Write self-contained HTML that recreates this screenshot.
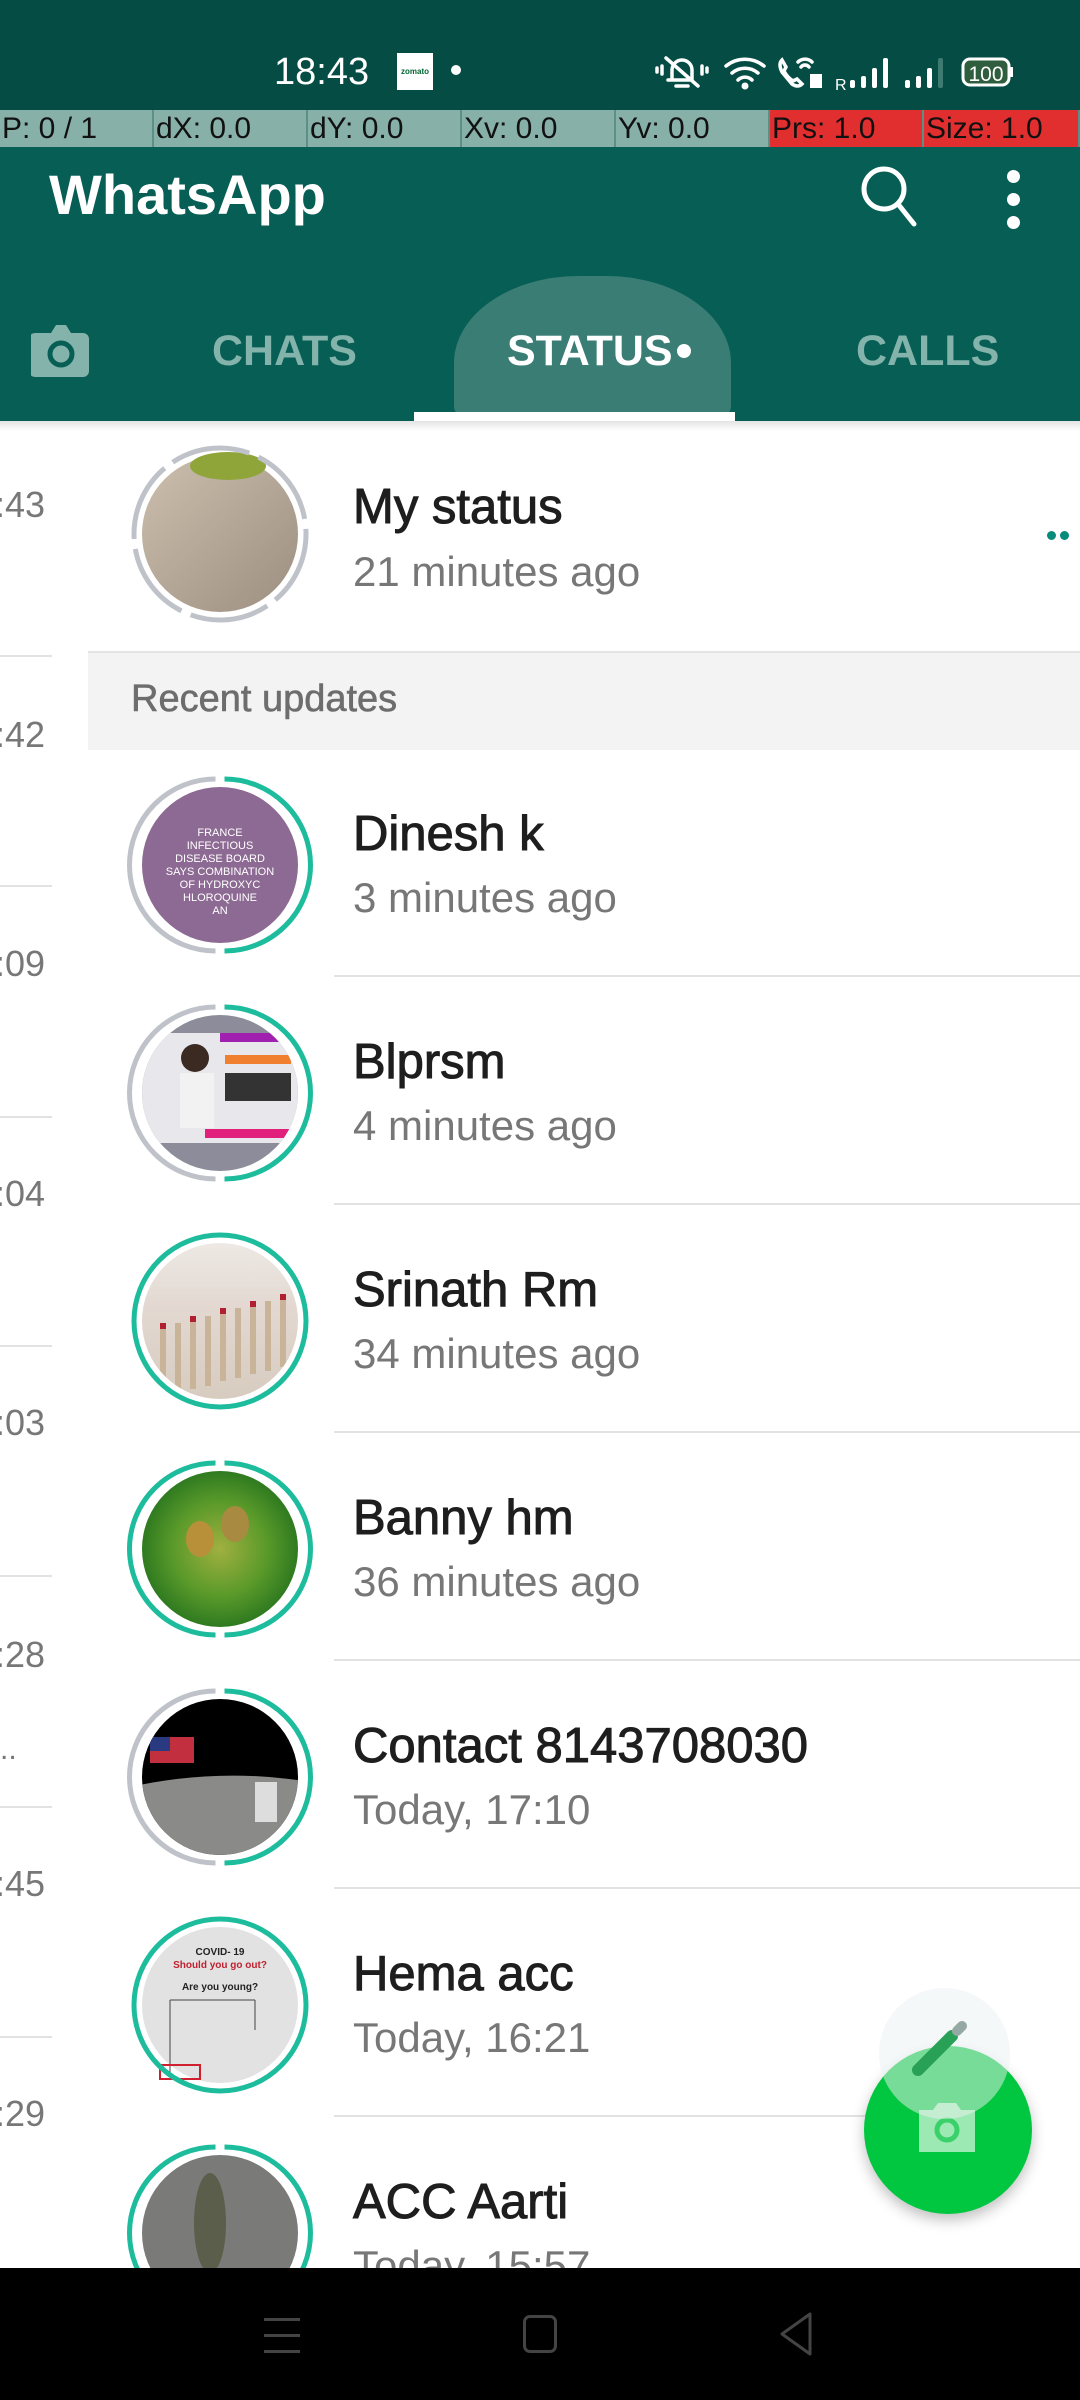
<!DOCTYPE html>
<html><head><meta charset="utf-8"><style>
*{margin:0;padding:0;box-sizing:border-box}
body{width:1080px;height:2400px;overflow:hidden;background:#fff;font-family:"Liberation Sans",Arial,sans-serif;position:relative}
.a{position:absolute}
.sb{left:0;top:0;width:1080px;height:110px;background:#054d44}
.dbg{top:110px;height:37px;width:154px;font-family:"Liberation Sans",sans-serif;font-size:30px;line-height:37px;color:#111;padding-left:2px;border-right:2px solid #5d8f87;transform-origin:left;}
.app{left:0;top:147px;width:1080px;height:274px;background:#075e55}
.tab{top:329px;font-size:43px;font-weight:bold;color:#83b3ab;line-height:44px}
.time{right:1035px;font-size:36px;color:#777;line-height:40px;text-align:right;width:80px}
.div{left:0;width:52px;height:2px;background:#e2e2e2}
.name{left:353px;font-size:49px;color:#1e1e1e;-webkit-text-stroke:1px #1e1e1e;line-height:56px;white-space:nowrap}
.sub{left:353px;font-size:42px;color:#777;line-height:50px;white-space:nowrap}
.rd{left:334px;width:746px;height:2px;background:#e2e2e2}
svg.av{width:190px;height:190px;overflow:visible}
</style></head><body>
<div class="a sb"></div>
<div class="a" style="left:274px;top:50px;font-size:38px;color:#fff;line-height:44px">18:43</div>
<div class="a" style="left:397px;top:53px;width:36px;height:37px;background:#fff;font-size:8px;color:#063;text-align:center;line-height:37px;font-weight:bold">zomato</div>
<div class="a" style="left:451px;top:65px;width:10px;height:10px;border-radius:50%;background:#fff"></div>
<svg class="a" style="left:650px;top:52px" width="420" height="40" viewBox="0 0 420 40">
 <g fill="none" stroke="#fff" stroke-width="3.5" stroke-linecap="round">
  <path d="M22 28 V18 a10 10 0 0 1 20 0 V28 H18 M26 34h12 M12 14v8 M7 16v4 M52 14v8 M57 16v4 M16 6 L48 34"/>
  <path d="M76 14 a30 30 0 0 1 38 0 M82 21 a20 20 0 0 1 26 0 M88 28 a10 10 0 0 1 14 0"/>
  <path d="M132 8 q-4 4 0 12 l10 12 q6 4 10 0 l-5 -5 l-4 2 q-6 -4 -9 -10 l2 -4z"/>
  <path d="M148 10 a10 10 0 0 1 14 0 M151 15 a5 5 0 0 1 8 0"/>
 </g>
 <circle cx="95" cy="34" r="3.5" fill="#fff"/>
 <rect x="160" y="22" width="12" height="14" fill="#fff"/>
 <text x="185" y="38" font-size="16" fill="#fff" font-family="Liberation Sans">R</text>
 <g fill="#fff"><rect x="200" y="28" width="5" height="8" rx="2"/><rect x="211" y="24" width="5" height="12" rx="2"/><rect x="222" y="16" width="5" height="20" rx="2"/><rect x="233" y="6" width="5" height="30" rx="2"/>
 <rect x="255" y="28" width="5" height="8" rx="2"/><rect x="266" y="24" width="5" height="12" rx="2"/><rect x="277" y="16" width="5" height="20" rx="2"/></g>
 <rect x="288" y="6" width="5" height="30" rx="2" fill="#3f7a70"/>
 <rect x="313" y="7" width="46" height="26" rx="7" fill="#2e5e3e" stroke="#fff" stroke-width="3"/>
 <rect x="360" y="15" width="3" height="10" fill="#fff"/>
 <text x="336" y="29" font-size="21" fill="#fff" text-anchor="middle" font-family="Liberation Sans">100</text>
</svg>
<div class="a dbg" style="left:0;background:#86b0a8">P: 0 / 1</div>
<div class="a dbg" style="left:154px;background:#86b0a8">dX: 0.0</div>
<div class="a dbg" style="left:308px;background:#86b0a8">dY: 0.0</div>
<div class="a dbg" style="left:462px;background:#86b0a8">Xv: 0.0</div>
<div class="a dbg" style="left:616px;background:#86b0a8">Yv: 0.0</div>
<div class="a dbg" style="left:770px;background:#e12e2e">Prs: 1.0</div>
<div class="a dbg" style="left:924px;width:156px;background:#e12e2e">Size: 1.0</div>
<div class="a app"></div>
<div class="a" style="left:49px;top:163px;font-size:56px;font-weight:bold;color:#fff;line-height:64px">WhatsApp</div>
<svg class="a" style="left:858px;top:162px" width="60" height="66"><circle cx="26" cy="27" r="20" fill="none" stroke="#fff" stroke-width="5"/><path d="M40 42 L56 62" stroke="#fff" stroke-width="5" stroke-linecap="round"/></svg>
<div class="a" style="left:1007px;top:170px;width:13px;height:13px;border-radius:50%;background:#fff;box-shadow:0 23px 0 #fff,0 46px 0 #fff"></div>
<div class="a" style="left:454px;top:276px;width:277px;height:145px;background:#397d74;border-radius:45% 45% 8% 8%/60% 60% 10% 10%"></div>
<svg class="a" style="left:31px;top:321px" width="60" height="58"><path d="M8 12 h12 l5 -8 h10 l5 8 h12 a6 6 0 0 1 6 6 v32 a6 6 0 0 1 -6 6 h-48 a6 6 0 0 1 -6 -6 v-32 a6 6 0 0 1 6 -6z" fill="#83b3ab"/><circle cx="30" cy="33" r="11" fill="none" stroke="#075e55" stroke-width="5"/></svg>
<div class="a tab" style="left:212px">CHATS</div>
<div class="a tab" style="left:507px;color:#fff">STATUS</div>
<div class="a" style="left:677px;top:344px;width:14px;height:14px;border-radius:50%;background:#fff"></div>
<div class="a tab" style="left:856px">CALLS</div>
<div class="a" style="left:414px;top:412px;width:321px;height:9px;background:#fff"></div>
<div class="a" style="left:0;top:421px;width:1080px;height:10px;background:linear-gradient(#e4e4e4,#fff)"></div>

<!-- left chats sliver -->
<div class="a time" style="top:485px">:43</div>
<div class="a div" style="top:655px"></div>
<div class="a time" style="top:715px">:42</div>
<div class="a div" style="top:885px"></div>
<div class="a time" style="top:944px">:09</div>
<div class="a div" style="top:1116px"></div>
<div class="a time" style="top:1174px">:04</div>
<div class="a div" style="top:1345px"></div>
<div class="a time" style="top:1403px">:03</div>
<div class="a div" style="top:1575px"></div>
<div class="a time" style="top:1635px">:28</div>
<div class="a" style="left:0;top:1733px;font-size:30px;color:#777">..</div>
<div class="a div" style="top:1806px"></div>
<div class="a time" style="top:1864px">:45</div>
<div class="a div" style="top:2036px"></div>
<div class="a time" style="top:2094px">:29</div>

<!-- avatars -->
<svg class="a av" style="left:125px;top:439px" viewBox="-5 -5 190 190"><defs><linearGradient id="g0" x1="0" y1="0" x2="1" y2="1"><stop offset="0" stop-color="#cdbfae"/><stop offset=".5" stop-color="#b4a797"/><stop offset="1" stop-color="#9d8f80"/></linearGradient></defs><circle cx="90" cy="90" r="78" fill="url(#g0)"/><ellipse cx="98" cy="22" rx="38" ry="14" fill="#8fa53a"/><circle cx="90" cy="90" r="86" fill="none" stroke="#bfc3c9" stroke-width="5" stroke-dasharray="80 10" stroke-dashoffset="5"/></svg>
<div class="a name" style="left:353px;top:479px">My status</div>
<div class="a sub" style="top:547px">21 minutes ago</div>
<div class="a" style="left:1047px;top:531px;width:9px;height:9px;border-radius:50%;background:#078c7b;box-shadow:13px 0 0 #078c7b"></div>

<div class="a" style="left:88px;top:651px;width:992px;height:99px;background:#f3f3f3;border-top:2px solid #e4e4e4"></div>
<div class="a" style="left:131px;top:677px;font-size:38px;color:#6d6d6d;-webkit-text-stroke:0.6px #6d6d6d;line-height:44px">Recent updates</div>

<!-- rows -->
<svg class="a av" style="left:125px;top:770px" viewBox="-5 -5 190 190"><circle cx="90" cy="90" r="78" fill="#8d6a93"/><g fill="#fff" font-size="11" text-anchor="middle" font-family="Liberation Sans"><text x="90" y="61">FRANCE</text><text x="90" y="74">INFECTIOUS</text><text x="90" y="87">DISEASE BOARD</text><text x="90" y="100">SAYS COMBINATION</text><text x="90" y="113">OF HYDROXYC</text><text x="90" y="126">HLOROQUINE</text><text x="90" y="139">AN</text></g><path d="M85.5 176 A86 86 0 0 1 85.5 4" fill="none" stroke="#bfc3c9" stroke-width="5"/><path d="M94.5 4 A86 86 0 0 1 94.5 176" fill="none" stroke="#1dbc9c" stroke-width="5"/></svg>
<div class="a name" style="top:806px">Dinesh k</div>
<div class="a sub" style="top:873px">3 minutes ago</div>
<div class="a rd" style="top:975px"></div>

<svg class="a av" style="left:125px;top:998px" viewBox="-5 -5 190 190"><defs><clipPath id="c1"><circle cx="90" cy="90" r="78"/></clipPath></defs><g clip-path="url(#c1)"><rect width="180" height="180" fill="#8c8c9a"/><rect x="0" y="30" width="180" height="110" fill="#e8e8ec"/><circle cx="65" cy="55" r="14" fill="#3b2a22"/><rect x="50" y="70" width="34" height="55" fill="#f2f2f2"/><rect x="90" y="30" width="72" height="9" fill="#a020b0"/><rect x="95" y="52" width="66" height="9" fill="#f08030"/><rect x="95" y="70" width="66" height="28" fill="#333"/><rect x="75" y="126" width="90" height="9" fill="#e0207a"/></g><path d="M85.5 176 A86 86 0 0 1 85.5 4" fill="none" stroke="#bfc3c9" stroke-width="5"/><path d="M94.5 4 A86 86 0 0 1 94.5 176" fill="none" stroke="#1dbc9c" stroke-width="5"/></svg>
<div class="a name" style="top:1034px">Blprsm</div>
<div class="a sub" style="top:1101px">4 minutes ago</div>
<div class="a rd" style="top:1203px"></div>

<svg class="a av" style="left:125px;top:1226px" viewBox="-5 -5 190 190"><defs><linearGradient id="g2" x1="0" y1="0" x2="0" y2="1"><stop offset="0" stop-color="#f0ece8"/><stop offset=".4" stop-color="#e3d9d2"/><stop offset="1" stop-color="#d6cabd"/></linearGradient><clipPath id="c2"><circle cx="90" cy="90" r="78"/></clipPath></defs><g clip-path="url(#c2)"><rect width="180" height="180" fill="url(#g2)"/><g fill="#c9b49a"><rect x="30" y="95" width="6" height="70"/><rect x="45" y="92" width="6" height="70"/><rect x="60" y="88" width="6" height="70"/><rect x="75" y="85" width="6" height="70"/><rect x="90" y="80" width="6" height="70"/><rect x="105" y="77" width="6" height="70"/><rect x="120" y="73" width="6" height="70"/><rect x="135" y="70" width="6" height="70"/><rect x="150" y="66" width="6" height="70"/></g><g fill="#b02030"><rect x="30" y="92" width="6" height="6"/><rect x="60" y="85" width="6" height="6"/><rect x="90" y="77" width="6" height="6"/><rect x="120" y="70" width="6" height="6"/><rect x="150" y="63" width="6" height="6"/></g></g><circle cx="90" cy="90" r="86" fill="none" stroke="#1dbc9c" stroke-width="5"/></svg>
<div class="a name" style="top:1262px">Srinath Rm</div>
<div class="a sub" style="top:1329px">34 minutes ago</div>
<div class="a rd" style="top:1431px"></div>

<svg class="a av" style="left:125px;top:1454px" viewBox="-5 -5 190 190"><defs><radialGradient id="g3"><stop offset="0" stop-color="#a0b040"/><stop offset=".6" stop-color="#5a9a2a"/><stop offset="1" stop-color="#2f7a20"/></radialGradient></defs><circle cx="90" cy="90" r="78" fill="url(#g3)"/><ellipse cx="70" cy="80" rx="14" ry="18" fill="#b8903a"/><ellipse cx="105" cy="65" rx="14" ry="18" fill="#a88a40"/><path d="M85.5 176 A86 86 0 0 1 85.5 4" fill="none" stroke="#1dbc9c" stroke-width="5"/><path d="M94.5 4 A86 86 0 0 1 94.5 176" fill="none" stroke="#1dbc9c" stroke-width="5"/></svg>
<div class="a name" style="top:1490px">Banny hm</div>
<div class="a sub" style="top:1557px">36 minutes ago</div>
<div class="a rd" style="top:1659px"></div>

<svg class="a av" style="left:125px;top:1682px" viewBox="-5 -5 190 190"><defs><clipPath id="c4"><circle cx="90" cy="90" r="78"/></clipPath></defs><g clip-path="url(#c4)"><rect width="180" height="180" fill="#000"/><path d="M0 100 Q90 80 180 95 V180 H0z" fill="#8a8a88"/><rect x="20" y="50" width="44" height="26" fill="#c23040"/><rect x="20" y="50" width="20" height="14" fill="#2a3a80"/><rect x="125" y="95" width="22" height="40" fill="#ddd"/></g><path d="M85.5 176 A86 86 0 0 1 85.5 4" fill="none" stroke="#bfc3c9" stroke-width="5"/><path d="M94.5 4 A86 86 0 0 1 94.5 176" fill="none" stroke="#1dbc9c" stroke-width="5"/></svg>
<div class="a name" style="top:1718px">Contact 8143708030</div>
<div class="a sub" style="top:1785px">Today, 17:10</div>
<div class="a rd" style="top:1887px"></div>

<svg class="a av" style="left:125px;top:1910px" viewBox="-5 -5 190 190"><circle cx="90" cy="90" r="78" fill="#e2e2e2"/><g font-family="Liberation Sans" font-size="10" text-anchor="middle" font-weight="bold"><text x="90" y="40" fill="#222">COVID- 19</text><text x="90" y="53" fill="#c02030">Should you go out?</text><text x="90" y="75" fill="#222">Are you young?</text></g><path d="M40 85 h85 M40 85 v80 M125 85 v30" stroke="#444" fill="none"/><rect x="30" y="150" width="40" height="14" fill="none" stroke="#d02030" stroke-width="2"/><circle cx="90" cy="90" r="86" fill="none" stroke="#1dbc9c" stroke-width="5"/></svg>
<div class="a name" style="top:1946px">Hema acc</div>
<div class="a sub" style="top:2013px">Today, 16:21</div>
<div class="a rd" style="top:2115px;width:540px"></div>

<svg class="a av" style="left:125px;top:2138px" viewBox="-5 -5 190 190"><circle cx="90" cy="90" r="78" fill="#7a7a78"/><ellipse cx="80" cy="80" rx="16" ry="50" fill="#5a5e4a"/><path d="M85.5 176 A86 86 0 0 1 85.5 4" fill="none" stroke="#1dbc9c" stroke-width="5"/><path d="M94.5 4 A86 86 0 0 1 94.5 176" fill="none" stroke="#1dbc9c" stroke-width="5"/></svg>
<div class="a name" style="top:2174px">ACC Aarti</div>
<div class="a sub" style="top:2241px">Today, 15:57</div>

<!-- FAB -->
<div class="a" style="left:864px;top:2046px;width:168px;height:168px;border-radius:50%;background:#00c73f;box-shadow:0 6px 14px rgba(0,0,0,.25)"></div>
<svg class="a" style="left:915px;top:2096px" width="64" height="64"><path d="M4 14 h14 l5 -7 h18 l5 7 h14 v42 h-56z" fill="#b8eec8" opacity=".85"/><circle cx="32" cy="34" r="10" fill="none" stroke="#3ad06a" stroke-width="5"/></svg>
<div class="a" style="left:879px;top:1988px;width:131px;height:131px;border-radius:50%;background:rgba(236,241,241,.5)"></div>
<svg class="a" style="left:910px;top:2020px" width="66" height="66"><path d="M8 50 L42 16" stroke="#28a055" stroke-width="12" stroke-linecap="round"/><path d="M47 11 l5 -5" stroke="#94a8a4" stroke-width="10" stroke-linecap="round"/></svg>

<!-- nav bar -->
<div class="a" style="left:0;top:2268px;width:1080px;height:132px;background:#000"></div>
<div class="a" style="left:264px;top:2318px;width:36px;height:3px;background:#444;box-shadow:0 16px 0 #444,0 32px 0 #444"></div>
<div class="a" style="left:523px;top:2315px;width:34px;height:38px;border:3px solid #444;border-radius:7px"></div>
<svg class="a" style="left:776px;top:2310px" width="40" height="48"><path d="M34 4 V44 L6 24z" fill="none" stroke="#444" stroke-width="3" stroke-linejoin="round"/></svg>
</body></html>
